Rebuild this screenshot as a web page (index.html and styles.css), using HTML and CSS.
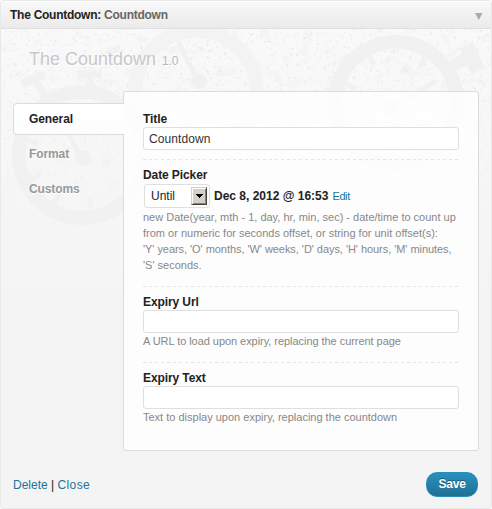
FILE: index.html
```html
<!DOCTYPE html>
<html lang="en">
<head>
<meta charset="utf-8">
<title>The Countdown</title>
<link rel="stylesheet" href="styles.css">
</head>
<body>
<section class="widget">
  <header class="bar">
    <h4><b>The Countdown:</b> <span>Countdown</span></h4>
    <svg class="arrow" width="8" height="7" viewBox="0 0 8 7"><path d="M0 0h7.5L3.75 7z" fill="#aaa"/></svg>
  </header>
  <div class="body">
    <svg class="backdrop" width="490" height="240" viewBox="1 29 490 240" aria-hidden="true">
      <defs>
        <filter id="grain" x="0" y="0" width="100%" height="100%">
          <feTurbulence type="fractalNoise" baseFrequency="0.07 0.09" numOctaves="6" seed="8"/>
          <feColorMatrix values="0 0 0 0 0.7  0 0 0 0 0.7  0 0 0 0 0.7  3 0 0 0 -1.72"/>
        </filter>
        <filter id="specks" x="0" y="0" width="100%" height="100%">
          <feTurbulence type="fractalNoise" baseFrequency="0.3" numOctaves="3" seed="3"/>
          <feColorMatrix values="0 0 0 0 0.65  0 0 0 0 0.65  0 0 0 0 0.65  5 0 0 0 -3.1"/>
        </filter>
        <linearGradient id="fade" x1="0" y1="0" x2="0" y2="1">
          <stop offset="0" stop-color="#fff"/>
          <stop offset=".3" stop-color="#fff" stop-opacity=".8"/>
          <stop offset=".8" stop-color="#fff" stop-opacity="0"/>
        </linearGradient>
        <mask id="fademask"><rect x="1" y="29" width="490" height="240" fill="url(#fade)"/></mask>
      </defs>
      <g mask="url(#fademask)">
        <rect x="1" y="29" width="490" height="240" filter="url(#grain)" opacity=".28"/>
        <rect x="1" y="29" width="490" height="240" filter="url(#specks)" opacity=".4"/>
      </g>
      <g fill="none" stroke="#f1f1f1">
        <g stroke-width="14">
          <circle cx="396" cy="103" r="61"/>
          <circle cx="196" cy="92" r="61" stroke="#f3f3f3"/>
          <circle cx="82" cy="155" r="63"/>
        </g>
        <g stroke-width="5">
          <path d="M390 110l46-29M369 56l5 9M346 84l11 5M393 50v4M425 58l-5 9M197 79l-18-36M82 158L66 130M28 140l10 4M31 180l10-5M54 203l6-9M91 208l-2-10"/>
          <path d="M22 84l22-10M34 79l12 18M78 74h24M90 74v20" stroke-width="8"/>
          <path d="M466 45l12 26" stroke-width="15"/>
          <path d="M449 68l18-10" stroke-width="12"/>
        </g>
      </g>
      <g fill="#f1f1f1"><circle cx="390" cy="108" r="8"/><circle cx="199" cy="81" r="8"/><circle cx="83" cy="158" r="8"/></g>
    </svg>
    <h3 class="heading">The Countdown <small>1.0</small></h3>
    <div class="columns">
      <nav class="tabs">
        <a class="tab active">General</a>
        <a class="tab">Format</a>
        <a class="tab">Customs</a>
      </nav>
      <div class="panel">
        <div class="field title">
          <label>Title</label>
          <div class="input">Countdown</div>
        </div>
        <div class="field date">
          <label>Date Picker</label>
          <div class="picker">
            <div class="select"><span>Until</span><i><svg width="7" height="4" viewBox="0 0 7 4" shape-rendering="crispEdges"><path d="M0 0h7v1H6v1H5v1H4v1H3V3H2V2H1V1H0z"/></svg></i></div>
            <b class="stamp">Dec 8, 2012 @ 16:53</b>
            <a class="edit">Edit</a>
          </div>
          <p class="help">new Date(year, mth - 1, day, hr, min, sec) - date/time to count up<br>from or numeric for seconds offset, or string for unit offset(s):<br><span class="units">'Y' years, 'O' months, 'W' weeks, 'D' days, 'H' hours, 'M' minutes,</span><br>'S' seconds.</p>
        </div>
        <div class="field url">
          <label>Expiry Url</label>
          <div class="input"></div>
          <p class="help">A URL to load upon expiry, replacing the current page</p>
        </div>
        <div class="field text">
          <label>Expiry Text</label>
          <div class="input"></div>
          <p class="help">Text to display upon expiry, replacing the countdown</p>
        </div>
      </div>
    </div>
    <footer class="actions">
      <div class="links"><a>Delete</a> | <a class="close">Close</a></div>
      <button class="save">Save</button>
    </footer>
  </div>
</section>
</body>
</html>
```
FILE: styles.css
```css
* { box-sizing: border-box; }
body { margin: 0; background: #fff; font-family: "Liberation Sans", Arial, sans-serif; font-size: 12px; color: #222; }
h3, h4, p { margin: 0; font-weight: normal; }
.widget { width: 492px; height: 509px; border: 1px solid #e9e9e9; border-radius: 3px; overflow: hidden; background: linear-gradient(#f9f9f9 30px, #f4f4f4 300px); }
.bar { display: flex; justify-content: space-between; align-items: center; height: 28px; padding: 0 8px 0 9px; border-bottom: 1px solid #dfdfdf; box-shadow: inset 0 1px 0 #fff; background: linear-gradient(#f8f8f8, #ebebeb); }
.bar h4 { padding-top: 1px; font-size: 12px; font-weight: bold; line-height: 27px; letter-spacing: -.26px; white-space: nowrap; }
.bar span { color: #666; }
.arrow { margin-top: 4px; }
.body { position: relative; height: 479px; }
.backdrop { position: absolute; left: 0; top: 0; }
.heading { position: relative; height: 62px; padding: 19px 0 0 28px; font-size: 18px; line-height: 22px; color: #c8c8c8; text-shadow: 1px 1px 0 #fff; white-space: nowrap; }
.heading small { font-size: 12px; letter-spacing: -.2px; color: #b8b8b8; margin-left: 1px; }
.columns { position: relative; display: flex; height: 360px; padding: 0 12px; }
.tabs { position: relative; z-index: 1; width: 111px; margin-right: -1px; padding-top: 12px; display: flex; flex-direction: column; gap: 3px; }
.tab { height: 32px; padding-left: 16px; line-height: 33px; font-weight: bold; letter-spacing: -.1px; color: #999; text-shadow: 0 1px 0 #fff; }
.active { padding-left: 15px; line-height: 31px; color: #222; background: linear-gradient(#fff, #fdfdfd); border: 1px solid #dcdcdc; border-right: 0; border-radius: 4px 0 0 4px; }
.panel { width: 356px; height: 360px; border: 1px solid #dcdcdc; border-radius: 3px; padding: 20px 19px 0; background: rgba(255, 255, 255, .8); }
.field { display: flex; flex-direction: column; align-items: flex-start; background: repeating-linear-gradient(90deg, #e4e4e4 0 3px, transparent 3px 6px) 0 100% / 100% 1px no-repeat; }
.field.title { height: 48px; }
.field.date { height: 127px; padding-top: 8px; }
.field.url { height: 76px; padding-top: 8px; }
.field.text { height: 76px; padding-top: 8px; background: none; }
label { height: 15px; line-height: 14px; font-weight: bold; letter-spacing: -.1px; }
.input { width: 316px; height: 23px; padding-left: 5px; border: 1px solid #dfdfdf; border-radius: 3px; background: #fff; line-height: 22px; color: #333; letter-spacing: .1px; }
.picker { display: flex; align-items: center; height: 26px; padding-left: 1px; white-space: nowrap; }
.select { display: flex; justify-content: space-between; align-items: center; width: 66px; height: 24px; padding: 0 2px 0 6px; border: 1px solid #dfdfdf; border-radius: 3px; background: #fff; }
.select i { display: flex; align-items: center; justify-content: center; width: 16px; height: 18px; background: #d4d0c8; border: 1px solid; border-color: #d4d0c8 #404040 #404040 #d4d0c8; box-shadow: inset 1px 1px #fff, inset -1px -1px #808080; }
.stamp { margin-left: 4px; }
.edit { margin-left: 4px; font-size: 11px; letter-spacing: -.4px; color: #21759b; }
.help { font-size: 11px; line-height: 16px; color: #888; white-space: nowrap; }
.units { letter-spacing: -.05px; }
.date .help { margin-top: 0; }
.url .help, .text .help { margin-top: 0; }
.url .help { letter-spacing: -.05px; }
.actions { display: flex; justify-content: space-between; align-items: center; padding: 21px 13px 0 12px; }
.links { line-height: 16px; }
.links a { color: #21759b; }
.links .close { letter-spacing: .4px; }
.save { width: 52px; height: 25px; padding: 0 0 1px; border: 1px solid #298cba; border-radius: 11px; background: linear-gradient(#2890c0, #216f94); font: bold 12px "Liberation Sans", Arial, sans-serif; letter-spacing: -.2px; color: #fff; text-shadow: 0 -1px 0 rgba(0, 0, 0, .35); }
```
